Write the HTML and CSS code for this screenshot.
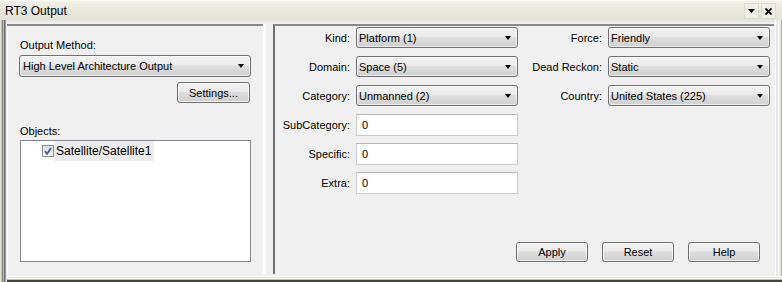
FILE: index.html
```html
<!DOCTYPE html>
<html>

<head>
	<title>RT3 Output</title>
	<meta charset='utf-8' />
	<link rel="stylesheet" href="styles.css">
</head>

<body>
	<div class="window">
		<div class="titlebar">
			<span class="title">RT3 Output</span>
			<div class="tbtns">
				<span class="tbtn"><svg width="7" height="4" viewBox="0 0 7 4"><path d="M0 0h7L3.5 4z" fill="#000"/></svg></span>
				<span class="tbtn"><svg width="7" height="7" viewBox="0 0 7 7"><path d="M0.5 0.5L6.5 6.5M6.5 0.5L0.5 6.5" stroke="#000" stroke-width="1.8"/></svg></span>
			</div>
		</div>
		<div class="frame">
			<div class="left">
				<div class="lbl">Output Method:</div>
				<div class="combo wide"><span>High Level Architecture Output</span><i class="arrow"></i></div>
				<div class="btnrow"><span class="btn settings">Settings...</span></div>
				<div class="lbl objects">Objects:</div>
				<div class="listbox">
					<div class="item">
						<span class="check"><svg width="10" height="10" viewBox="0 0 10 10"><path d="M2 5l2 3l4-6" stroke="#3e5a9c" stroke-width="1.8" fill="none"/></svg></span>
						<span class="itext">Satellite/Satellite1</span>
					</div>
				</div>
			</div>
			<div class="splitter"></div>
			<div class="right">
				<div class="fields">
					<label>Kind:</label>
					<div class="combo"><span>Platform (1)</span><i class="arrow"></i></div>
					<label>Force:</label>
					<div class="combo"><span>Friendly</span><i class="arrow"></i></div>

					<label>Domain:</label>
					<div class="combo"><span>Space (5)</span><i class="arrow"></i></div>
					<label>Dead Reckon:</label>
					<div class="combo"><span>Static</span><i class="arrow"></i></div>

					<label>Category:</label>
					<div class="combo"><span>Unmanned (2)</span><i class="arrow"></i></div>
					<label>Country:</label>
					<div class="combo"><span>United States (225)</span><i class="arrow"></i></div>

					<label>SubCategory:</label>
					<div class="edit">0</div>
					<span></span><span></span>

					<label>Specific:</label>
					<div class="edit">0</div>
					<span></span><span></span>

					<label>Extra:</label>
					<div class="edit">0</div>
				</div>
				<div class="actions">
					<span class="btn">Apply</span>
					<span class="btn">Reset</span>
					<span class="btn">Help</span>
				</div>
			</div>
		</div>
	</div>
</body>

</html>
```

FILE: styles.css
```css
body {
	margin: 0;
	font-family: "Liberation Sans", Arial, sans-serif;
	font-size: 11px;
	color: #000;
}

.window {
	width: 782px;
	height: 282px;
	background: #f0f0f0;
	overflow: hidden;
}

.titlebar {
	height: 20px;
	display: flex;
	align-items: center;
	justify-content: space-between;
	background: linear-gradient(#f2f1e8, #e3e2d3);
	box-shadow: inset 0 1px #fbfbf6;
}

.title {
	font-size: 12px;
	padding-left: 5px;
	padding-top: 2px;
}

.tbtns {
	display: flex;
	gap: 2px;
	padding-right: 6px;
	padding-top: 2px;
}

.tbtn {
	width: 13px;
	height: 14px;
	display: flex;
	align-items: center;
	justify-content: center;
	border: 1px solid #dcdbcf;
	background: #efeee6;
}

.frame {
	height: 262px;
	box-sizing: border-box;
	display: flex;
	padding: 4px 8px 8px 7px;
	background: #f0f0f0;
	box-shadow:
		inset 1px 0 #e4e3d6,
		inset 2px 0 #c4c4b8,
		inset 3px 0 #858585,
		inset 4px 0 #b8b8b8,
		inset 5px 0 #6a6a6a,
		inset 6px 0 #a4a4a4,
		inset 7px 0 #e6e6e6,
		inset 0 -2px #45453a,
		inset 0 -3px #c0c0c0,
		inset 0 -4px #fdfdfd,
		inset 0 -5px #e6e6e6,
		inset 0 -6px #fdfdfd,
		inset -1px 0 #b4b4a8,
		inset -3px 0 #e8e8e8,
		inset -4px 0 #fdfdfd,
		inset -6px 0 #e8e8e8,
		inset -7px 0 #fdfdfd,
		inset 0 2px #e6e6e6;
}

.left {
	width: 256px;
	box-sizing: border-box;
	border-top: 2px solid #8a8a8a;
	padding-left: 12px;
	display: flex;
	flex-direction: column;
	box-shadow: inset 1px 0 #fdfdfd;
}

.lbl {
	line-height: 13px;
	margin-top: 13px;
	padding-left: 1px;
}

.lbl.objects {
	margin-top: 22px;
}

.combo {
	height: 21px;
	box-sizing: border-box;
	border: 1px solid #707070;
	border-radius: 3px;
	background: linear-gradient(#f3f3f3 0%, #ebebeb 45%, #dedede 50%, #d0d0d0 100%);
	display: flex;
	align-items: center;
	justify-content: space-between;
	padding: 0 6px 0 2px;
	box-shadow: inset 0 0 0 1px rgba(255, 255, 255, 0.6);
}

.combo.wide {
	width: 232px;
	height: 22px;
	margin-top: 3px;
	padding-left: 3px;
}

.arrow {
	width: 0;
	height: 0;
	border-left: 3.5px solid transparent;
	border-right: 3.5px solid transparent;
	border-top: 4px solid #000;
}

.btnrow {
	display: flex;
	justify-content: flex-end;
	width: 231px;
	margin-top: 5px;
}

.btn {
	width: 72px;
	height: 20px;
	box-sizing: border-box;
	border: 1px solid #707070;
	border-radius: 3px;
	background: linear-gradient(#f2f2f2 0%, #ebebeb 45%, #dddddd 50%, #cfcfcf 100%);
	box-shadow: inset 0 0 0 1px rgba(255, 255, 255, 0.7);
	display: flex;
	align-items: center;
	justify-content: center;
}

.btn.settings {
	width: 73px;
	height: 21px;
}

.listbox {
	margin-top: 2px;
	margin-left: 1px;
	width: 231px;
	height: 122px;
	box-sizing: border-box;
	border: 1px solid #828790;
	background: #fff;
}

.item {
	display: flex;
	align-items: center;
	height: 20px;
	padding-left: 21px;
}

.check {
	width: 12px;
	height: 12px;
	box-sizing: border-box;
	border: 1px solid #8e8f8f;
	background: linear-gradient(#dcdcdc, #fafafa);
	display: flex;
	align-items: center;
	justify-content: center;
}

.itext {
	font-size: 12px;
	background: #ececec;
	height: 20px;
	line-height: 20px;
	padding: 0 3px 0 2px;
}

.splitter {
	width: 10px;
	box-shadow: inset 3px 0 #fcfcfc;
}

.right {
	flex: 1;
	box-sizing: border-box;
	border-left: 2px solid #6e6e6e;
	border-top: 2px solid #8a8a8a;
	display: flex;
	flex-direction: column;
	padding-bottom: 12px;
}

.fields {
	display: grid;
	grid-template-columns: 75px 162px 78px 162px;
	grid-auto-rows: 22px;
	column-gap: 6px;
	row-gap: 7px;
	padding-top: 1px;
}

.fields label {
	text-align: right;
	align-self: center;
	white-space: nowrap;
}

.fields .combo {
	align-self: start;
}

.edit {
	height: 22px;
	box-sizing: border-box;
	border: 1px solid #c9cacd;
	border-top-color: #b5b6ba;
	background: #fff;
	padding-left: 5px;
	line-height: 20px;
}

.actions {
	margin-top: auto;
	display: flex;
	justify-content: flex-end;
	gap: 14px;
	padding-right: 14px;
}
```
